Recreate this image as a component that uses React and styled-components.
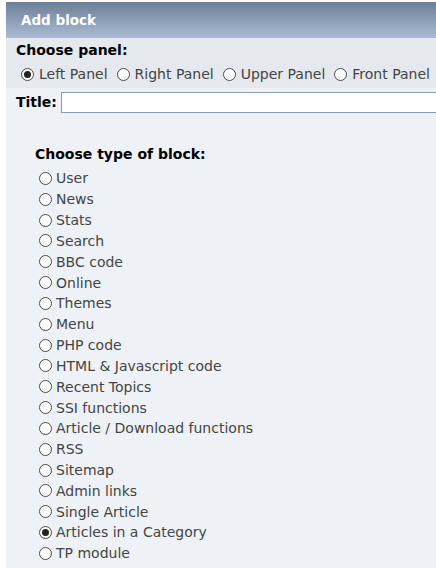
import React from "react";
import styled, { createGlobalStyle } from "styled-components";

const Global = createGlobalStyle`
  html, body { margin: 0; padding: 0; background: #fff; overflow: hidden; }
  body { font-family: "DejaVu Sans", Verdana, sans-serif; font-size: 14px; color: #444; }
`;

const Page = styled.div`
  padding: 2px 0 0 6px;
`;

const Frame = styled.div`
  overflow: hidden;
`;

const Header = styled.div`
  height: 36px;
  display: flex;
  align-items: center;
  padding-left: 15px;
  background: linear-gradient(#6c7f97, #a9bcd3);
  color: #fff;
  font-weight: bold;
  font-size: 13.5px;
`;

const PanelSection = styled.div`
  background: #e5e9ee;
  padding: 4px 0 0 10px;
  height: 46px;
  white-space: nowrap;
`;

const Label = styled.div`
  font-weight: bold;
  color: #000;
  font-size: 14px;
  line-height: 17px;
  white-space: nowrap;
`;

const RadioRow = styled.div`
  display: flex;
  align-items: center;
  margin-top: 7px;
  padding-left: 5px;
  gap: 9px;
`;

const Choice = styled.label`
  display: flex;
  align-items: center;
  gap: 5px;
  white-space: nowrap;
`;

const Circle = styled.span`
  width: 11px;
  height: 11px;
  border: 1px solid #4a4a4a;
  border-radius: 50%;
  background: #fff;
  display: inline-flex;
  align-items: center;
  justify-content: center;
  flex-shrink: 0;
  &::after {
    content: "";
    width: 7px;
    height: 7px;
    border-radius: 50%;
    background: ${(p) => (p.$checked ? "#222" : "transparent")};
  }
`;

const Body = styled.div`
  background: #eef2f6;
  padding: 4px 0 10px 10px;
`;

const TitleRow = styled.div`
  display: flex;
  align-items: center;
  gap: 4px;
`;

const TextInput = styled.div`
  flex: 1;
  height: 19px;
  background: #fff;
  border: 1px solid #7f9db9;
  margin-right: -10px;
`;

const BlockTypes = styled.div`
  padding: 33px 0 0 19px;
`;

const List = styled.div`
  display: flex;
  flex-direction: column;
  padding-left: 4px;
  margin-top: 5px;
`;

const Item = styled.label`
  display: flex;
  align-items: center;
  gap: 4px;
  height: 20.83px;
  white-space: nowrap;
`;

const panels = ["Left Panel", "Right Panel", "Upper Panel", "Front Panel"];
const types = [
  "User", "News", "Stats", "Search", "BBC code", "Online", "Themes", "Menu",
  "PHP code", "HTML & Javascript code", "Recent Topics", "SSI functions",
  "Article / Download functions", "RSS", "Sitemap", "Admin links",
  "Single Article", "Articles in a Category", "TP module",
];

export default function App() {
  return (
    <Page>
      <Global />
      <Frame>
        <Header>Add block</Header>
        <PanelSection>
          <Label>Choose panel:</Label>
          <RadioRow>
            {panels.map((p, i) => (
              <Choice key={p}>
                <Circle $checked={i === 0} />
                {p}
              </Choice>
            ))}
          </RadioRow>
        </PanelSection>
        <Body>
          <TitleRow>
            <Label>Title:</Label>
            <TextInput />
          </TitleRow>
          <BlockTypes>
            <Label>Choose type of block:</Label>
            <List>
              {types.map((t) => (
                <Item key={t}>
                  <Circle $checked={t === "Articles in a Category"} />
                  {t}
                </Item>
              ))}
            </List>
          </BlockTypes>
        </Body>
      </Frame>
    </Page>
  );
}
